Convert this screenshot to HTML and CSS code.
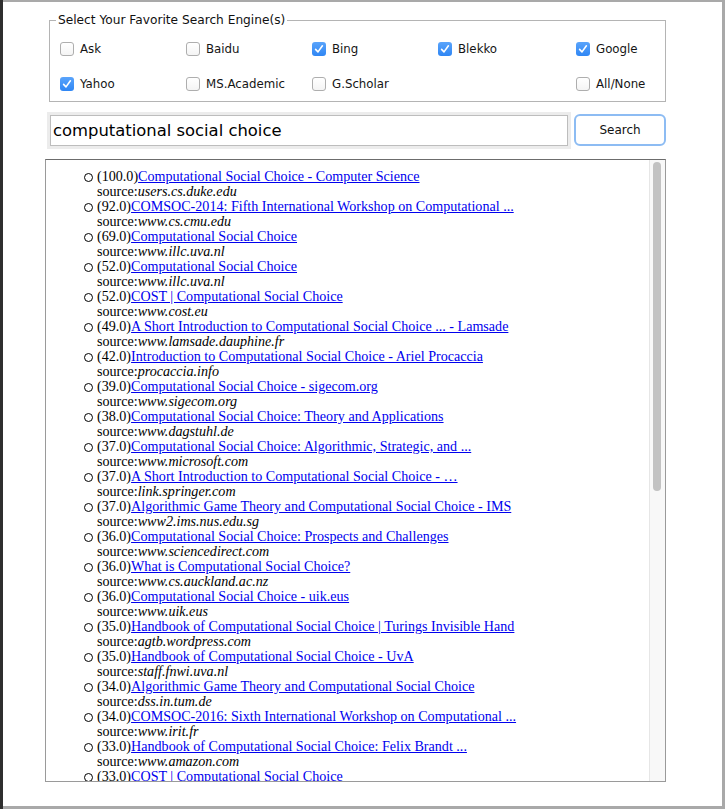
FILE: index.html
```html
<!DOCTYPE html>
<html>
<head>
<meta charset="utf-8">
<link rel="stylesheet" href="styles.css">
</head>
<body>
<div class="window">
  <fieldset class="engines">
    <legend>Select Your Favorite Search Engine(s)</legend>
    <div class="grid">
      <label class="opt"><span class="box"></span>Ask</label>
      <label class="opt"><span class="box"></span>Baidu</label>
      <label class="opt"><span class="box checked"><svg viewBox="0 0 14 14"><path d="M3.6 7.4 L6 9.9 L10.4 3.8"/></svg></span>Bing</label>
      <label class="opt"><span class="box checked"><svg viewBox="0 0 14 14"><path d="M3.6 7.4 L6 9.9 L10.4 3.8"/></svg></span>Blekko</label>
      <label class="opt"><span class="box checked"><svg viewBox="0 0 14 14"><path d="M3.6 7.4 L6 9.9 L10.4 3.8"/></svg></span>Google</label>
      <label class="opt"><span class="box checked"><svg viewBox="0 0 14 14"><path d="M3.6 7.4 L6 9.9 L10.4 3.8"/></svg></span>Yahoo</label>
      <label class="opt"><span class="box"></span>MS.Academic</label>
      <label class="opt"><span class="box"></span>G.Scholar</label>
      <span></span>
      <label class="opt"><span class="box"></span>All/None</label>
    </div>
  </fieldset>

  <div class="searchrow">
    <div class="field">computational social choice</div>
    <div class="btn">Search</div>
  </div>

  <div class="results">
    <div class="list">
      <ul>
        <li><span class="b"></span>(100.0)<a href="#">Computational Social Choice - Computer Science</a><br>source:<i>users.cs.duke.edu</i></li>
        <li><span class="b"></span>(92.0)<a href="#">COMSOC-2014: Fifth International Workshop on Computational ...</a><br>source:<i>www.cs.cmu.edu</i></li>
        <li><span class="b"></span>(69.0)<a href="#">Computational Social Choice</a><br>source:<i>www.illc.uva.nl</i></li>
        <li><span class="b"></span>(52.0)<a href="#">Computational Social Choice</a><br>source:<i>www.illc.uva.nl</i></li>
        <li><span class="b"></span>(52.0)<a href="#">COST | Computational Social Choice</a><br>source:<i>www.cost.eu</i></li>
        <li><span class="b"></span>(49.0)<a href="#">A Short Introduction to Computational Social Choice ... - Lamsade</a><br>source:<i>www.lamsade.dauphine.fr</i></li>
        <li><span class="b"></span>(42.0)<a href="#">Introduction to Computational Social Choice - Ariel Procaccia</a><br>source:<i>procaccia.info</i></li>
        <li><span class="b"></span>(39.0)<a href="#">Computational Social Choice - sigecom.org</a><br>source:<i>www.sigecom.org</i></li>
        <li><span class="b"></span>(38.0)<a href="#">Computational Social Choice: Theory and Applications</a><br>source:<i>www.dagstuhl.de</i></li>
        <li><span class="b"></span>(37.0)<a href="#">Computational Social Choice: Algorithmic, Strategic, and ...</a><br>source:<i>www.microsoft.com</i></li>
        <li><span class="b"></span>(37.0)<a href="#">A Short Introduction to Computational Social Choice - …</a><br>source:<i>link.springer.com</i></li>
        <li><span class="b"></span>(37.0)<a href="#">Algorithmic Game Theory and Computational Social Choice - IMS</a><br>source:<i>www2.ims.nus.edu.sg</i></li>
        <li><span class="b"></span>(36.0)<a href="#">Computational Social Choice: Prospects and Challenges</a><br>source:<i>www.sciencedirect.com</i></li>
        <li><span class="b"></span>(36.0)<a href="#">What is Computational Social Choice?</a><br>source:<i>www.cs.auckland.ac.nz</i></li>
        <li><span class="b"></span>(36.0)<a href="#">Computational Social Choice - uik.eus</a><br>source:<i>www.uik.eus</i></li>
        <li><span class="b"></span>(35.0)<a href="#">Handbook of Computational Social Choice | Turings Invisible Hand</a><br>source:<i>agtb.wordpress.com</i></li>
        <li><span class="b"></span>(35.0)<a href="#">Handbook of Computational Social Choice - UvA</a><br>source:<i>staff.fnwi.uva.nl</i></li>
        <li><span class="b"></span>(34.0)<a href="#">Algorithmic Game Theory and Computational Social Choice</a><br>source:<i>dss.in.tum.de</i></li>
        <li><span class="b"></span>(34.0)<a href="#">COMSOC-2016: Sixth International Workshop on Computational ...</a><br>source:<i>www.irit.fr</i></li>
        <li><span class="b"></span>(33.0)<a href="#">Handbook of Computational Social Choice: Felix Brandt ...</a><br>source:<i>www.amazon.com</i></li>
        <li><span class="b"></span>(33.0)<a href="#">COST | Computational Social Choice</a><br>source:<i>www.cost.eu</i></li>
      </ul>
    </div>
    <div class="scrollbar"><div class="thumb"></div></div>
  </div>
</div>
</body>
</html>
```

FILE: styles.css
```css
html, body {
  margin: 0;
  padding: 0;
}
body {
  width: 725px;
  height: 809px;
  overflow: hidden;
  background: linear-gradient(to right, #2e2e2e 0, #2e2e2e 3px, #a9a9a9 3px);
}
.window {
  box-sizing: border-box;
  margin: 2px 3px 0 3px;
  height: 804px;
  background: #fff;
  padding: 11px 0 0 42px;
  font-family: "DejaVu Sans", sans-serif;
  color: #111;
}
.engines {
  box-sizing: border-box;
  width: 617px;
  margin: 0 0 0 4px;
  padding: 0 0 2px 10px;
  border: 1px solid #b4b4b4;
  height: 89px;
}
.engines legend {
  font-size: 12.2px;
  line-height: 14px;
  padding: 0 2px;
  margin-left: -4px;
  color: #111;
}
.grid {
  display: grid;
  grid-template-columns: 126px 126px 126px 138px auto;
  grid-auto-rows: 35px;
  margin-top: 4px;
}
.opt {
  display: flex;
  align-items: center;
  font-size: 11.8px;
  color: #151515;
}
.box {
  box-sizing: border-box;
  width: 14px;
  height: 14px;
  border: 1px solid #aeaeae;
  border-radius: 3px;
  background: linear-gradient(#ffffff, #f4f4f4);
  margin-right: 6px;
  flex: none;
  display: flex;
}
.box.checked {
  border: none;
  background: linear-gradient(#5aa4fb, #2f86f4);
}
.box svg {
  width: 14px;
  height: 14px;
}
.box svg path {
  fill: none;
  stroke: #fff;
  stroke-width: 1.6;
  stroke-linecap: round;
  stroke-linejoin: round;
}
.searchrow {
  display: flex;
  align-items: center;
  height: 33px;
  margin-top: 12px;
  margin-left: 5px;
}
.field {
  box-sizing: border-box;
  width: 518px;
  height: 31px;
  border: 1px solid #bdbdbd;
  box-shadow: 0 0 0 3px #ececec;
  background: #fff;
  font-size: 16.4px;
  line-height: 29px;
  padding-left: 2px;
  color: #000;
}
.btn {
  box-sizing: border-box;
  width: 92px;
  height: 32px;
  margin-left: 6px;
  margin-top: -2px;
  border: 2px solid #8dbcf3;
  border-radius: 6px;
  background: #fff;
  font-size: 12px;
  text-align: center;
  line-height: 28px;
  color: #111;
}
.results {
  box-sizing: border-box;
  width: 621px;
  height: 623px;
  margin-top: 12px;
  border: 1px solid #9a9a9a;
  border-top-color: #6c6c6c;
  display: flex;
  overflow: hidden;
}
.list {
  flex: 1;
  overflow: hidden;
  font-family: "Liberation Serif", serif;
  font-size: 14.1px;
  line-height: 15px;
  color: #000;
}
.list ul {
  list-style: none;
  margin: 0;
  padding: 9px 0 0 51px;
}
.list li {
  white-space: nowrap;
}
.list a {
  color: #0000ee;
  text-decoration: underline;
}
.list i {
  font-style: italic;
}
.b {
  display: inline-block;
  box-sizing: border-box;
  width: 9px;
  height: 9px;
  border: 1px solid #000;
  border-radius: 50%;
  margin-left: -13px;
  margin-right: 4px;
  vertical-align: -1px;
}
.scrollbar {
  box-sizing: border-box;
  width: 16px;
  flex: none;
  border-left: 1px solid #e6e6e6;
  background: #f8f8f8;
  padding: 2px 0 0 3px;
}
.thumb {
  width: 8px;
  height: 329px;
  border-radius: 4px;
  background: #c2c2c2;
}
```
